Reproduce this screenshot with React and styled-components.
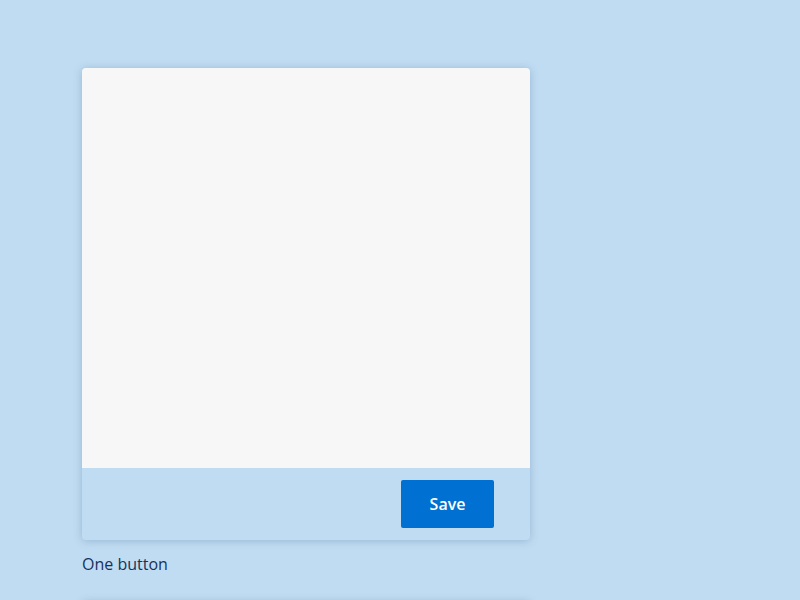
import React from "react";
import styled, { createGlobalStyle } from "styled-components";

const Global = createGlobalStyle`
  html, body { margin: 0; padding: 0; background: #c0dcf2; }
  body { font-family: "Open Sans", "Noto Sans", sans-serif; color: #16325c; }
`;

const Page = styled.div`
  display: flex;
  flex-direction: column;
  gap: 27px;
  padding: 68px 0 0 82px;
  height: 600px;
  box-sizing: border-box;
  overflow: hidden;
`;

const Example = styled.div`
  display: flex;
  flex-direction: column;
  gap: 14px;
`;

const Card = styled.div`
  width: 448px;
  border-radius: 4px;
  overflow: hidden;
  box-shadow: 0 1px 8px rgba(60, 100, 150, 0.3);
  background: #c0dcf2;
`;

const Body = styled.div`
  height: 400px;
  background: #f7f7f7;
`;

const Footer = styled.div`
  height: 72px;
  display: flex;
  align-items: center;
  justify-content: flex-end;
  padding: 0 36px;
  box-sizing: border-box;
`;

const Button = styled.button`
  width: 93px;
  height: 48px;
  border: none;
  border-radius: 2px;
  background: #0070d2;
  color: #fff;
  font-family: "Open Sans", "Noto Sans", sans-serif;
  font-weight: 600;
  font-size: 16px;
  cursor: pointer;
`;

const Label = styled.div`
  font-size: 16px;
  line-height: 20px;
  color: #16325c;
`;

export default function App() {
  return (
    <>
      <Global />
      <Page>
        <Example>
          <Card>
            <Body />
            <Footer>
              <Button>Save</Button>
            </Footer>
          </Card>
          <Label>One button</Label>
        </Example>
        <Example>
          <Card>
            <Body />
          </Card>
        </Example>
      </Page>
    </>
  );
}
